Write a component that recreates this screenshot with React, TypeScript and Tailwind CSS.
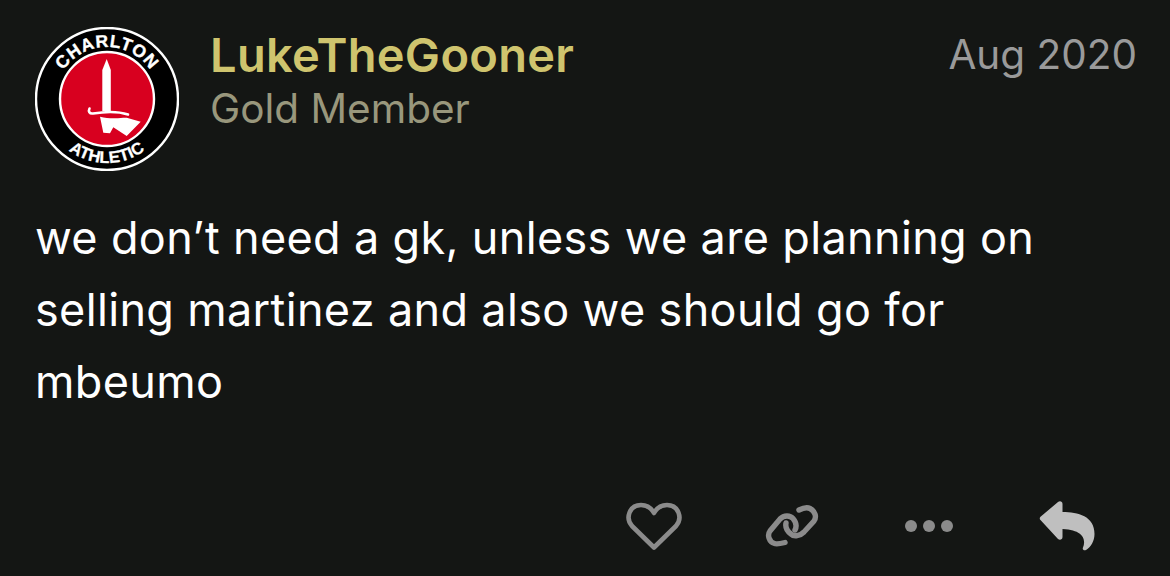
import React from 'react';

const Crest = () => (
    <svg viewBox="0 0 144 144" className="w-[144px] h-[144px] shrink-0">
        <defs>
            <path id="topArc" d="M 20 72 A 52 52 0 0 1 124 72" />
            <path id="bottomArc" d="M 8 72 A 64 64 0 0 0 136 72" />
        </defs>
        <circle cx="72" cy="72" r="71" fill="#000" stroke="#fff" strokeWidth="2.4" />
        <circle cx="72" cy="72" r="47" fill="#d8001f" stroke="#fff" strokeWidth="2.4" />
        <text fontFamily="'Liberation Sans', sans-serif" fontWeight="700" fontSize="17.5" letterSpacing="0.8" stroke="#fff" strokeWidth="0.4" fill="#fff" textAnchor="middle">
            <textPath href="#topArc" startOffset="50%">CHARLTON</textPath>
        </text>
        <text fontFamily="'Liberation Sans', sans-serif" fontWeight="700" fontSize="16.5" letterSpacing="0.2" stroke="#fff" strokeWidth="0.3" fill="#fff" textAnchor="middle">
            <textPath href="#bottomArc" startOffset="50%">ATHLETIC</textPath>
        </text>
        <path d="M71.7 32 L75.8 43 V84 H67.3 V43 Z" fill="#fff" />
        <path d="M54.5 81.5 C53 84.5 54.5 87 58 86.5 C70 84.5 84 84.5 93 87.5" fill="none" stroke="#fff" strokeWidth="2.6" strokeLinecap="round" />
        <path d="M65 89.7 C70 91 74 91.3 78.3 91.3 C84 91.5 88 90.5 91.7 90.7 L105.7 94.7 L91.7 109 L78.3 100.3 L75 106.3 L68.3 105.7 Z" fill="#fff" />
    </svg>
);

const HeartIcon = () => (
    <svg viewBox="0 0 56 48" className="w-[56px] h-[48px]" fill="none" stroke="#8b8b8b" strokeWidth="4.6" strokeLinejoin="round">
        <path d="M28 45.5 L6 24 C-1 16 3.5 3 15 3 C21 3 25.5 6.5 28 11 C30.5 6.5 35 3 41 3 C52.5 3 57 16 50 24 Z" />
    </svg>
);

const LinkIcon = () => (
    <svg viewBox="0 0 54 42" className="w-[54px] h-[42px]" fill="none" stroke="#8b8b8b" strokeWidth="5.4" strokeLinecap="round">
        <path d="M20 37.5 C16 38.5 12 39.5 9.5 38.5 C4 37 2 30 5 26 L15 14 C19 10 25 10 28 13.5 C31 17 32 21 30 25" />
        <path d="M34 5 C38 3 42 2 45 3.5 C50 6 52 12 49 16 L39 27 C35 31 29 32 26 29 C22 26 20 23 21 18" />
    </svg>
);

const DotsIcon = () => (
    <svg viewBox="0 0 48 12" className="w-[48px] h-[12px]" fill="#8b8b8b">
        <circle cx="6" cy="6" r="6" />
        <circle cx="24" cy="6" r="6" />
        <circle cx="42" cy="6" r="6" />
    </svg>
);

const ReplyIcon = () => (
    <svg viewBox="0 0 56 50" className="w-[56px] h-[50px]" fill="#bfbfbf">
        <path d="M1 18.5 C0.5 17.5 0.8 16.5 1.5 15.8 L19 1 C21 -0.5 23.5 0.5 23.5 3 V11 C39 11 55.5 15 55.5 33 C55.5 40 52 46 47 49 C45 50 43 48.5 44 46.5 C47 39 45 29 23.5 28 V36 C23.5 38.5 21 39.5 19 38 Z" />
    </svg>
);

export default function App() {
    return (
        <div className="w-[1170px] h-[576px] bg-[#141614] overflow-hidden font-['Inter','Liberation_Sans',sans-serif]">
            <div className="flex pl-[35px] pr-[33px] pt-[27px]">
                <Crest />
                <div className="ml-[31px] pt-px flex-1">
                    <div className="flex justify-between">
                        <span className="text-[47px] leading-[54px] font-semibold tracking-[0.3px] text-[#cfc46e]">LukeTheGooner</span>
                        <span className="text-[40.5px] leading-[54px] text-[#9a9a9a]">Aug 2020</span>
                    </div>
                    <div className="text-[40.5px] leading-[54px] text-[#99977c]">Gold Member</div>
                </div>
            </div>
            <p className="mt-[31px] pl-[35px] w-[1040px] text-[45px] leading-[72px] tracking-[0.34px] text-white">
                we don’t need a gk, unless we are planning on selling martinez and also we should go for mbeumo
            </p>
            <div className="mt-[83px] flex items-center pl-[626px]">
                <HeartIcon />
                <div className="ml-[83px]"><LinkIcon /></div>
                <div className="ml-[86px]"><DotsIcon /></div>
                <div className="ml-[86px]"><ReplyIcon /></div>
            </div>
        </div>
    );
}
